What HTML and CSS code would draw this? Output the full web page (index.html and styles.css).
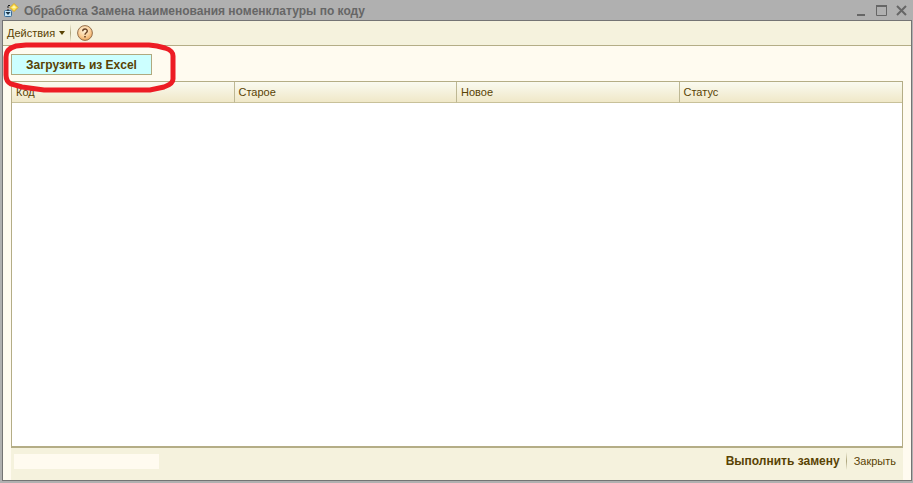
FILE: index.html
```html
<!DOCTYPE html>
<html lang="ru">
<head>
  <meta charset="UTF-8" />
  <meta name="viewport" content="width=device-width, initial-scale=1.0" />
  <title>Обработка Замена наименования номенклатуры по коду</title>
  <link rel="stylesheet" href="styles.css">
</head>
<body>

  <!-- Title bar -->
  <header class="titlebar">
    <svg class="app-icon" width="16" height="16" viewBox="0 0 16 16">
      <rect x="1.5" y="7.5" width="7" height="6" rx="1" fill="#c4e6fa" stroke="#3a6d98" />
      <path d="M5 3v6M7 2.500H5" fill="none" stroke="#222" stroke-dasharray="2 1" />
      <path d="M2.500 9h5L5 12z" fill="#1c3548" />
      <path d="M11 0.500L15 4.500L11 8.500L7 4.500z" fill="#ffe352" stroke="#d9a520" />
      <path d="M11 2.500L13 4.500L11 5.500L9 4.500z" fill="#fff6b0" />
    </svg>
    <h1 class="title">Обработка Замена наименования номенклатуры по коду</h1>
    <div class="window-buttons">
      <button class="win-btn" aria-label="Свернуть">
        <svg width="12" height="12" viewBox="0 0 12 12"><path d="M1 9h8v2H1z" fill="#666" /></svg>
      </button>
      <button class="win-btn" aria-label="Развернуть">
        <svg width="12" height="12" viewBox="0 0 12 12"><path d="M.5 1v9.500h10V1" fill="none" stroke="#666" /><path d="M0 0h11v2H0z" fill="#666" /></svg>
      </button>
      <button class="win-btn" aria-label="Закрыть окно">
        <svg width="12" height="12" viewBox="0 0 12 12"><path d="M1 1l9 9M10 1l-9 9" stroke="#666" stroke-width="2" /></svg>
      </button>
    </div>
  </header>

  <main class="window">

    <!-- Menu -->
    <nav class="toolbar">
      <button class="menu-btn">Действия
        <svg width="6" height="5" viewBox="0 0 6 5"><path d="M0 0h6L3 4z" fill="#594304" /></svg>
      </button>
      <span class="separator"></span>
      <button class="help-btn" aria-label="Справка">
        <svg width="16" height="16" viewBox="0 0 16 16">
          <defs>
            <radialGradient id="helpFill" cx="45%" cy="35%" r="65%">
              <stop offset="0" stop-color="#fff3dc" />
              <stop offset="0.600" stop-color="#fbd09a" />
              <stop offset="1" stop-color="#eda55c" />
            </radialGradient>
          </defs>
          <circle cx="8" cy="8" r="7.400" fill="url(#helpFill)" stroke="#94704d" />
          <path d="M5.700 6.200C5.700 3.300 10.300 3.300 10.300 6C10.300 7.700 8 7.700 8 9.700" fill="none" stroke="#6b4324" stroke-width="1.400" />
          <path d="M7.200 10.900h1.600v1.500H7.200z" fill="#6b4324" />
        </svg>
      </button>
    </nav>

    <div class="content">
      <div class="load-row">
        <button class="load-btn">Загрузить из Excel</button>
        <svg class="marker" width="176" height="54" viewBox="0 0 176 54">
          <path d="M24 4H147L155 5L163 7C169 9 171 11 171 15V38C171 42 168 44 162 46L148 49H42L20 46L9 43C5 41 4 38 4 34V16C4 10 7 7 14 5Z" />
        </svg>
      </div>

      <div class="table-box">
        <table class="items">
          <thead>
            <tr>
              <th>Код</th>
              <th>Старое</th>
              <th>Новое</th>
              <th>Статус</th>
            </tr>
          </thead>
          <tbody></tbody>
        </table>
      </div>

      <footer class="footer">
        <div class="status"></div>
        <button class="foot-btn primary">Выполнить замену</button>
        <span class="separator"></span>
        <button class="foot-btn">Закрыть</button>
      </footer>
    </div>
  </main>

</body>
</html>
```
FILE: styles.css
```css
* {
  box-sizing: border-box;
  margin: 0;
  padding: 0;
}

html {
  height: 100%;
}

body {
  height: 100%;
  display: flex;
  flex-direction: column;
  padding: 0 1px 2px 2px;
  background: #b0b0b0;
  color: #594304;
  font-family: "Liberation Sans", Arial, sans-serif;
  font-size: 11px;
  line-height: 14px;
  overflow: hidden;
}

button {
  background: none;
  border: none;
  color: inherit;
  font: inherit;
  cursor: pointer;
}

svg {
  display: block;
}

/* title bar */
.titlebar {
  display: flex;
  align-items: center;
  height: 20px;
  padding: 2px 4px 0 1px;
  color: #666;
}

.title {
  flex: 1;
  margin-left: 5px;
  font-size: 12px;
  line-height: 16px;
  font-weight: bold;
  white-space: nowrap;
}

.window-buttons {
  display: flex;
  gap: 8px;
}

/* window */
.window {
  flex: 1;
  display: flex;
  flex-direction: column;
  min-height: 0;
  border: 1px solid #747474;
  background: #fffbf0;
}

.toolbar {
  display: flex;
  align-items: center;
  height: 25px;
  padding-left: 4px;
  border-bottom: 1px solid #b4ad86;
  background: #f5f2dd;
}

.menu-btn {
  display: flex;
  align-items: center;
  gap: 4px;
}

.separator {
  width: 1px;
  height: 18px;
  background: linear-gradient(#f5f2dd, #aca47c, #f5f2dd);
}

.toolbar .separator {
  margin: 0 6px 0 5px;
}

.content {
  flex: 1;
  display: flex;
  flex-direction: column;
  min-height: 0;
  padding: 8px 8px 0;
}

.load-row {
  position: relative;
  margin-bottom: 6px;
}

.load-btn {
  display: block;
  width: 141px;
  height: 21px;
  border: 1px solid #b0a97f;
  background: #ccffff;
  font-size: 12px;
  font-weight: bold;
}

/* red outline drawn over the button */
.marker {
  position: absolute;
  left: -9px;
  top: -13px;
  fill: none;
  stroke: #ed1c24;
  stroke-width: 5;
  pointer-events: none;
}

/* table */
.table-box {
  flex: 1;
  border: 1px solid #b4ad86;
  border-bottom-width: 2px;
  background: #fff;
}

.items {
  width: 100%;
  table-layout: fixed;
  border-collapse: separate;
  border-spacing: 0;
}

.items th {
  height: 21px;
  padding: 0 3px 0 4px;
  border-right: 1px solid #beb894;
  border-bottom: 1px solid #c8c19a;
  background: linear-gradient(#fafaf0, #f0e8c8);
  font-weight: normal;
  text-align: left;
}

.items th:last-child {
  border-right: none;
}

/* footer */
.footer {
  display: flex;
  align-items: center;
  height: 32px;
  padding: 0 7px 6px 3px;
  background: #f5f2dd;
}

.status {
  width: 145px;
  height: 15px;
  margin-right: auto;
  background: #fffbf0;
}

.footer .separator {
  margin: 0 7px 0 6px;
}

.primary {
  font-size: 12px;
  font-weight: bold;
}
```
